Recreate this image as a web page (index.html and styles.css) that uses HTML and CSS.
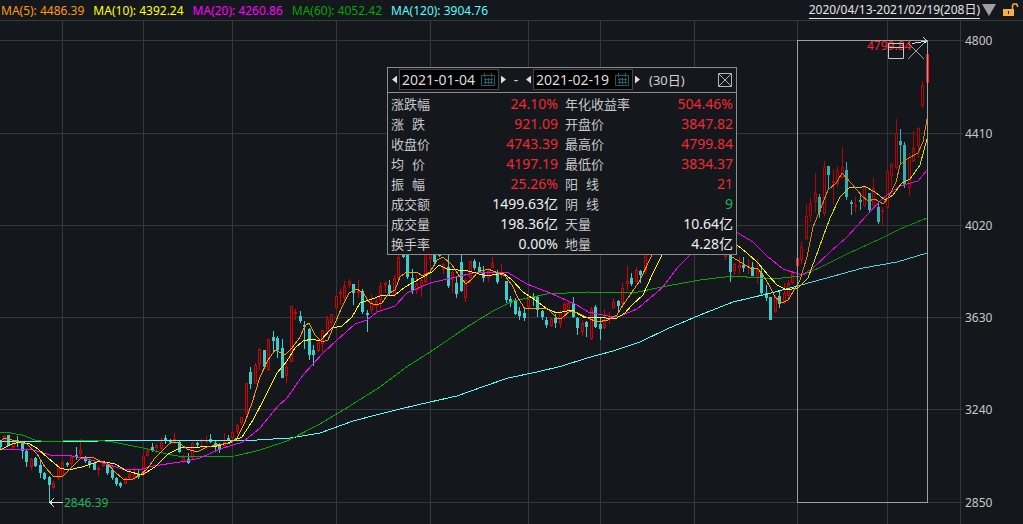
FILE: index.html
```
<!DOCTYPE html>
<html lang="zh-CN">
<head>
    <meta charset="utf-8">
    <title>区间统计</title>
    <link rel="stylesheet" href="styles.css">
</head>
<body>
    <header class="topbar">
        <div class="legend">
            <span class="ma5">MA(5): 4486.39</span>
            <span class="ma10">MA(10): 4392.24</span>
            <span class="ma20">MA(20): 4260.86</span>
            <span class="ma60">MA(60): 4052.42</span>
            <span class="ma120">MA(120): 3904.76</span>
        </div>
        <a class="range-link" href="#">2020/04/13-2021/02/19(208日)</a>
        <button class="icon-btn" aria-label="展开">
            <svg width="14" height="12" viewBox="0 0 14 12"><path d="M0 0h14L7 12z" fill="#a0a0a0"/></svg>
        </button>
        <button class="icon-btn lock" aria-label="锁定">
            <svg width="16" height="14" viewBox="0 0 16 14">
                <path d="M0 6h11v7H0z" fill="#f5b041"/>
                <path d="M9.5 6V2.500l1-1.500h3l1 1.500V4" fill="none" stroke="#f5b041" stroke-width="1.500"/>
                <path d="M5 8h1v3H5z" fill="#14171c"/>
            </svg>
        </button>
    </header>

    <main class="chart">
        <svg class="plot" viewBox="0 20 1023 504">
            <path class="grid" d="M0 20.500H1023M0 40.500H963M0 133.500H963M0 225.500H963M0 317.500H963M0 409.500H963M0 502.500H963"/>
            <path class="grid" d="M62.500 20V524M143.500 20V524M232.500 20V524M336.500 20V524M430.500 20V524M528.500 20V524M600.500 20V524M694.500 20V524M797.500 20V524M887.500 20V524M960.500 20V524"/>
            <g class="axis">
                <text x="965" y="45">4800</text>
                <text x="965" y="138">4410</text>
                <text x="965" y="230">4020</text>
                <text x="965" y="322">3630</text>
                <text x="965" y="414">3240</text>
                <text x="965" y="507">2850</text>
            </g>
            <g id="candles"></g>
            <g id="averages"></g>
            <rect class="range-shade" x="798" y="41" width="129" height="461"/>
            <rect class="range-box" x="797.5" y="40.500" width="130" height="462"/>
            <path class="leader" d="M63 502.500H50M54 498l-4 4.500 4 4.500"/>
            <text class="low" x="64" y="507">2846.39</text>
            <text class="high" x="867" y="50">4799.84</text>
            <path class="leader" d="M912 43.500L927 41M923 37l4 4-4 3"/>
        </svg>

        <div class="range-tools">
            <button class="icon-btn" aria-label="还原">
                <svg width="16" height="16" viewBox="0 0 16 16"><path d="M.5.5h15v15H.5zM0 4.500h16" fill="none" stroke="#c8c8c8"/></svg>
            </button>
            <button class="icon-btn" aria-label="关闭区间">
                <svg width="16" height="16" viewBox="0 0 16 16"><path d="M0 0l16 16M16 0L0 16" fill="none" stroke="#a0a0a0"/></svg>
            </button>
        </div>

        <section class="stats">
            <div class="stats-head">
                <button class="step prev" aria-label="开始日期前移"></button>
                <div class="date">
                    <input type="text" aria-label="开始日期" value="2021-01-04">
                    <svg width="14" height="13" viewBox="0 0 14 13"><path d="M.5 2.500h13v10H.5zM3.500 0v4M10.500 0v4M4.500 5v6M7.500 5v6M10.500 5v6M3 6.500h9M3 9.500h9" fill="none" stroke="#0b6470"/></svg>
                </div>
                <button class="step next" aria-label="开始日期后移"></button>
                <span class="dash">-</span>
                <button class="step prev" aria-label="结束日期前移"></button>
                <div class="date">
                    <input type="text" aria-label="结束日期" value="2021-02-19">
                    <svg width="14" height="13" viewBox="0 0 14 13"><path d="M.5 2.500h13v10H.5zM3.500 0v4M10.500 0v4M4.500 5v6M7.500 5v6M10.500 5v6M3 6.500h9M3 9.500h9" fill="none" stroke="#0b6470"/></svg>
                </div>
                <button class="step next" aria-label="结束日期后移"></button>
                <span class="days">(30日)</span>
                <button class="icon-btn close" aria-label="关闭">
                    <svg width="14" height="14" viewBox="0 0 14 14"><path d="M.5.5h13v13H.5zM1 1l12 12M13 1L1 13" fill="none" stroke="#b4b4b4"/></svg>
                </button>
            </div>
            <table>
                <tr><th>涨跌幅</th><td class="up">24.10%</td><th>年化收益率</th><td class="up">504.46%</td></tr>
                <tr><th><span class="pair"><i>涨</i><i>跌</i></span></th><td class="up">921.09</td><th>开盘价</th><td class="up">3847.82</td></tr>
                <tr><th>收盘价</th><td class="up">4743.39</td><th>最高价</th><td class="up">4799.84</td></tr>
                <tr><th><span class="pair"><i>均</i><i>价</i></span></th><td class="up">4197.19</td><th>最低价</th><td class="up">3834.37</td></tr>
                <tr><th><span class="pair"><i>振</i><i>幅</i></span></th><td class="up">25.26%</td><th><span class="pair"><i>阳</i><i>线</i></span></th><td class="up">21</td></tr>
                <tr><th>成交额</th><td>1499.63亿</td><th><span class="pair"><i>阴</i><i>线</i></span></th><td class="down">9</td></tr>
                <tr><th>成交量</th><td>198.36亿</td><th>天量</th><td>10.64亿</td></tr>
                <tr><th>换手率</th><td>0.00%</td><th>地量</th><td>4.28亿</td></tr>
            </table>
        </section>
    </main>

    <script src="script.js"></script>
</body>
</html>
```

FILE: styles.css
```
* {
    box-sizing: border-box;
}

body {
    margin: 0;
    background: #14171c;
    color: #d2d2d2;
    font-family: "Noto Sans", "Noto Sans CJK SC", sans-serif;
    font-size: 12px;
    overflow: hidden;
}

.topbar {
    display: flex;
    align-items: center;
    height: 20px;
    padding: 0 4px 0 1px;
    white-space: nowrap;
}

.legend {
    display: flex;
    flex: 1;
    gap: 9px;
}

.ma5 { color: #ff9900; }
.ma10 { color: #ffff00; }
.ma20 { color: #ff00ff; }
.ma60 { color: #00a800; }
.ma120 { color: #54fcfc; }

.range-link {
    color: #e6e6e6;
    line-height: 16px;
    text-decoration: none;
    border-bottom: 1px solid #e6e6e6;
}

.icon-btn {
    display: block;
    padding: 0;
    border: none;
    background: none;
    cursor: pointer;
}

.icon-btn svg {
    display: block;
}

.topbar .icon-btn {
    margin-left: 2px;
}

.topbar .lock {
    margin-left: 7px;
}

/* chart */
.chart {
    position: relative;
}

.plot {
    display: block;
    width: 100%;
}

.plot path,
.plot rect,
.plot polyline {
    shape-rendering: crispEdges;
}

.grid {
    fill: none;
    stroke: #36383c;
}

.axis {
    fill: #c8c8c8;
}

.candle-up { fill: #14171c; stroke: #d20000; }
.candle-full { fill: #ff1414; stroke: #ff1414; }
.candle-down { fill: #3ccdcd; stroke: #3ccdcd; }

.average {
    fill: none;
    stroke: currentColor;
}

.range-shade { fill: rgba(20, 23, 28, .16); }
.range-box { fill: none; stroke: #a0a0a0; }
.leader { fill: none; stroke: #dcdcdc; }
.low { fill: #1eb450; }
.high { fill: #f52832; }

.range-tools {
    position: absolute;
    top: 23px;
    left: 888px;
    display: flex;
    gap: 4px;
}

/* statistics window */
.stats {
    position: absolute;
    top: 47px;
    left: 387px;
    width: 350px;
    border: 1px solid #8c8c8c;
    background: #14171c;
    font-size: 14px;
}

.stats-head {
    display: flex;
    align-items: center;
    height: 25px;
    padding: 0 4px 1px;
    border-bottom: 1px solid #8c8c8c;
}

.step {
    width: 5px;
    height: 8px;
    padding: 0;
    border: none;
    background: #dcdcdc;
    cursor: pointer;
}

.prev { clip-path: polygon(100% 0, 100% 100%, 0 50%); }
.next { clip-path: polygon(0 0, 100% 50%, 0 100%); }

.date {
    display: flex;
    align-items: center;
    width: 100px;
    height: 21px;
    margin: 0 2px;
    padding: 0 3px 0 2px;
    border: 1px solid #464646;
    background: #000;
}

.date input {
    flex: 1;
    min-width: 0;
    height: 19px;
    padding: 0;
    border: none;
    outline: none;
    background: none;
    color: #dcdcdc;
    font: inherit;
}

.dash {
    width: 20px;
    text-align: center;
}

.days {
    margin-left: 9px;
    font-size: 13px;
}

.close {
    margin-left: auto;
}

table {
    width: 100%;
    margin-top: 1px;
    border-collapse: collapse;
    table-layout: fixed;
    line-height: 20px;
}

th, td {
    width: 24%;
    height: 20px;
    padding: 0 3px;
    white-space: nowrap;
}

th {
    color: #c8c8c8;
    font-size: 13px;
    font-weight: normal;
    text-align: left;
}

td {
    color: #f0f0f0;
    text-align: right;
}

td:nth-child(2) {
    width: 26%;
    padding-right: 4px;
}

th:nth-child(3) {
    width: 26%;
}

.pair {
    display: flex;
    gap: 8px;
}

.pair i {
    font-style: normal;
}

.up { color: #f52832; }
.down { color: #1eb450; }
```

FILE: script.js
```
// [type, high, body top, body bottom, low] - u: up, d: down, f: filled, null: no bar
var candles = [
    ['d',440,442,446,448], ['u',435,436,440,441], ['d',435,435,445,445], ['u',440,442,446,449], ['d',436,440,442,446],
    ['d',441,442,450,458], ['d',449,451,461,466], ['u',458,459,466,469], ['d',457,458,465,466], ['d',460,465,472,477],
    ['d',472,473,478,479], ['d',476,477,484,502], ['u',481,483,487,488], ['u',467,468,477,479], ['u',461,462,474,476],
    ['d',462,463,464,466], ['u',455,456,463,466], ['d',447,455,456,459], ['u',439,450,453,455], ['d',456,457,460,462],
    ['d',459,461,463,467], ['d',462,463,469,469], ['u',466,468,469,475], ['u',462,463,465,466], ['d',463,464,472,474],
    ['d',469,470,477,479], ['d',477,478,483,485], ['d',482,483,485,487], ['u',477,478,483,483], ['u',470,474,477,479],
    ['u',467,474,477,479], ['d',470,474,476,478], ['u',454,456,474,475], ['u',448,451,455,455], ['d',443,447,449,451],
    ['u',444,445,447,452], ['u',437,442,448,449], ['d',435,438,440,443], ['d',439,440,441,443], ['u',433,439,441,443],
    ['d',441,442,451,452], ['u',455,457,461,462], ['d',453,459,462,463], ['u',442,443,457,459], ['d',442,443,444,446],
    ['u',439,441,441,447], ['u',436,440,441,443], ['d',434,439,441,442], ['d',441,443,446,449], ['d',443,446,449,452],
    ['u',433,442,445,446], ['d',435,438,439,440], ['u',431,432,437,441], ['u',424,425,431,433], ['u',417,417,422,424],
    ['u',383,383,413,413], ['d',367,372,383,388], ['u',363,365,382,383], ['u',348,349,363,369], ['d',350,350,366,367],
    ['u',339,339,369,370], ['d',331,337,340,352], ['d',336,338,349,357], ['d',339,348,377,377], ['u',360,367,375,382],
    ['u',306,306,361,361], ['u',309,312,313,319], ['d',311,316,320,322], ['d',321,325,326,348], ['d',328,329,354,359],
    ['d',345,350,354,365], ['u',338,343,350,351], ['u',330,330,343,351], ['u',316,319,331,332], ['u',314,314,322,329],
    ['u',296,296,307,308], ['u',289,292,293,304], ['u',281,286,297,300], ['u',279,281,284,287], ['d',284,284,292,304],
    ['u',280,291,292,297], ['d',289,291,311,313], ['d',310,313,314,331], ['u',294,302,309,313], ['u',299,301,305,311],
    ['u',282,286,299,308], ['u',281,283,284,292], ['d',280,285,292,294], ['u',275,278,294,296], ['u',250,257,277,278],
    ['d',253,254,256,257], ['d',250,252,276,278], ['d',269,278,289,293], ['u',275,284,289,293], ['u',279,280,285,296],
    ['u',250,251,281,282], ['u',250,251,258,261], ['d',250,252,261,265], ['d',250,251,255,256], ['u',263,264,269,273],
    ['d',254,267,285,287], ['u',270,272,279,292], ['d',276,283,293,297], ['d',255,262,290,291], ['u',278,280,297,301],
    ['u',260,261,277,282], ['d',259,261,267,269], ['d',262,267,271,272], ['d',266,272,277,281], ['u',268,271,277,281],
    ['u',257,263,267,267], ['d',270,273,281,283], ['u',264,272,273,277], ['d',281,281,299,302], ['d',296,299,302,306],
    ['d',298,300,313,314], ['d',307,311,315,319], ['d',307,313,317,320], ['u',293,299,306,309], ['d',293,297,298,305],
    ['d',296,297,309,316], ['d',310,311,316,319], ['d',317,320,324,327], ['u',318,319,325,326], ['d',314,318,322,327],
    ['u',310,312,323,327], ['u',302,304,309,318], ['u',301,303,309,310], ['d',297,303,316,317], ['d',317,318,327,334],
    ['u',320,323,331,335], ['d',321,322,326,336], ['u',307,309,338,339], ['d',305,307,326,327], ['d',317,324,328,339],
    ['u',309,320,327,328], ['u',312,316,317,323], ['u',298,302,307,308], ['d',300,301,305,310], ['u',283,288,302,307],
    ['u',266,281,283,289], ['d',273,278,283,285], ['u',267,270,281,282], ['d',270,271,274,282], ['u',250,252,270,273],
    null, null, null, null, null, null, null, null, null, null, null, null, null, null, null, null, null,
    ['u',253,255,256,259], ['d',250,252,271,281], ['u',263,264,270,274], ['u',257,265,267,273], ['d',257,265,267,271],
    ['u',259,266,267,273], ['d',262,267,275,275], ['u',259,270,277,282], ['d',268,273,292,295], ['d',285,293,297,300],
    ['d',297,297,319,319], ['u',295,297,311,312], ['d',290,296,303,307], ['u',283,293,301,303], ['u',280,283,295,297],
    ['u',271,272,282,283], ['f',257,258,265,266], ['u',241,246,259,263], ['u',204,216,238,239], ['u',198,203,215,221],
    ['u',173,193,201,211], ['d',194,197,211,217], ['u',161,167,213,215], ['d',166,166,174,189], ['u',169,181,182,203],
    ['u',166,170,183,186], ['u',147,167,177,177], ['d',162,170,196,199], ['d',200,202,203,214], ['u',196,205,206,212],
    ['d',194,200,201,209], ['u',185,187,205,206], ['d',193,193,209,212], ['u',178,188,205,207], ['d',203,207,221,223],
    ['u',207,210,211,225], ['u',170,171,207,208], ['u',163,164,175,186], ['u',119,133,167,168], ['d',129,141,144,164],
    ['d',142,145,184,187], ['u',153,157,187,195], ['u',131,148,160,161], ['u',127,128,145,157], ['u',81,85,105,107],
    ['f',54,54,82,83]
];

var averages = {
    ma5: '0,441 5,438 12,440 20,442 27,444 30,447 37,454 45,467 53,476 57,477 63,476 72,467 82,457 92,457 100,461 107,463 115,472 123,479 133,479 140,475 147,469 155,458 162,451 170,443 178,442 187,449 197,452 207,447 217,445 230,443 237,438 245,422 252,403 260,377 268,360 275,350 285,355 292,348 300,337 305,326 309,323 315,335 322,342 328,340 335,323 342,307 349,293 357,289 363,293 370,303 376,305 382,303 388,294 395,290 400,277 405,273 417,272 422,276 430,272 437,260 443,257 452,265 460,277 466,284 472,279 478,272 488,269 498,273 505,276 512,285 518,298 525,309 538,308 548,309 557,318 562,318 570,311 578,313 588,318 597,322 608,320 617,315 623,305 630,295 639,282 652,255 690,200 732,257 742,263 750,268 758,269 763,275 770,287 775,297 782,303 788,300 793,292 800,280 807,257 813,227 820,210 828,190 837,182 842,173 852,184 862,196 868,201 875,199 883,204 888,198 896,182 900,165 907,159 918,153 923,142 927,119',
    ma10: '0,450 12,444 20,442 30,444 38,449 48,458 60,468 68,470 82,467 100,461 115,464 127,471 142,475 155,467 168,454 180,448 200,447 217,446 228,443 242,437 253,420 265,397 277,373 287,361 295,348 303,341 312,339 320,341 332,328 342,326 352,317 360,303 372,299 380,296 395,295 405,287 423,277 432,272 439,265 447,269 468,271 487,276 503,273 512,280 523,292 538,302 547,309 557,313 572,310 585,318 597,317 615,319 625,313 632,305 643,295 653,273 662,255 700,210 737,245 747,253 758,263 768,275 777,285 787,290 798,288 808,278 819,248 830,218 840,197 850,187 860,188 864,186 875,192 885,200 893,195 902,183 910,179 920,165 927,139',
    ma20: '0,449 30,449 50,455 72,456 100,462 122,469 142,469 153,466 187,461 200,458 220,449 243,442 260,428 278,406 287,398 303,375 323,353 337,340 355,324 367,320 377,312 395,306 407,293 430,283 452,278 477,272 507,272 527,284 550,293 577,305 588,312 608,316 620,316 637,309 663,287 678,267 690,255 715,220 738,233 753,242 767,256 783,269 802,275 813,268 830,252 847,237 867,215 883,198 900,186 918,181 927,170',
    ma60: '0,432 5,432 22,435 35,440 47,442 63,441 80,440 97,440 113,442 143,448 167,454 183,457 235,456 260,450 287,441 320,424 353,404 380,387 408,366 430,352 467,327 493,311 513,301 547,294 587,292 633,293 667,286 700,280 733,276 773,279 800,276 819,268 847,254 880,239 900,229 927,218',
    ma120: '0,442 100,441 233,440 257,440 290,438 320,433 353,421 380,414 400,409 430,402 457,396 482,387 508,378 537,372 562,366 587,358 613,351 640,342 667,329 700,315 733,302 767,294 790,288 823,279 863,268 897,262 927,253'
};

var step = 4.48;

function draw(parent, tag, attrs) {
    var el = document.createElementNS('http://www.w3.org/2000/svg', tag);
    for (var key in attrs) {
        el.setAttribute(key, attrs[key]);
    }
    parent.appendChild(el);
}

var names = { u: 'candle-up', d: 'candle-down', f: 'candle-full' };
var group = document.getElementById('candles');

candles.forEach(function(c, i) {
    if (!c) {
        return;
    }
    var x = Math.floor(i * step) + 0.5;
    draw(group, 'path', { 'class': names[c[0]], d: 'M' + x + ' ' + c[1] + 'V' + (c[4] + 1) });
    draw(group, 'rect', { 'class': names[c[0]], x: x - 1, y: c[2] + 0.5, width: 2, height: Math.max(c[3] - c[2], 0.1) });
});

['ma120', 'ma60', 'ma20', 'ma10', 'ma5'].forEach(function(name) {
    draw(document.getElementById('averages'), 'polyline', { 'class': 'average ' + name, points: averages[name] });
});
```
